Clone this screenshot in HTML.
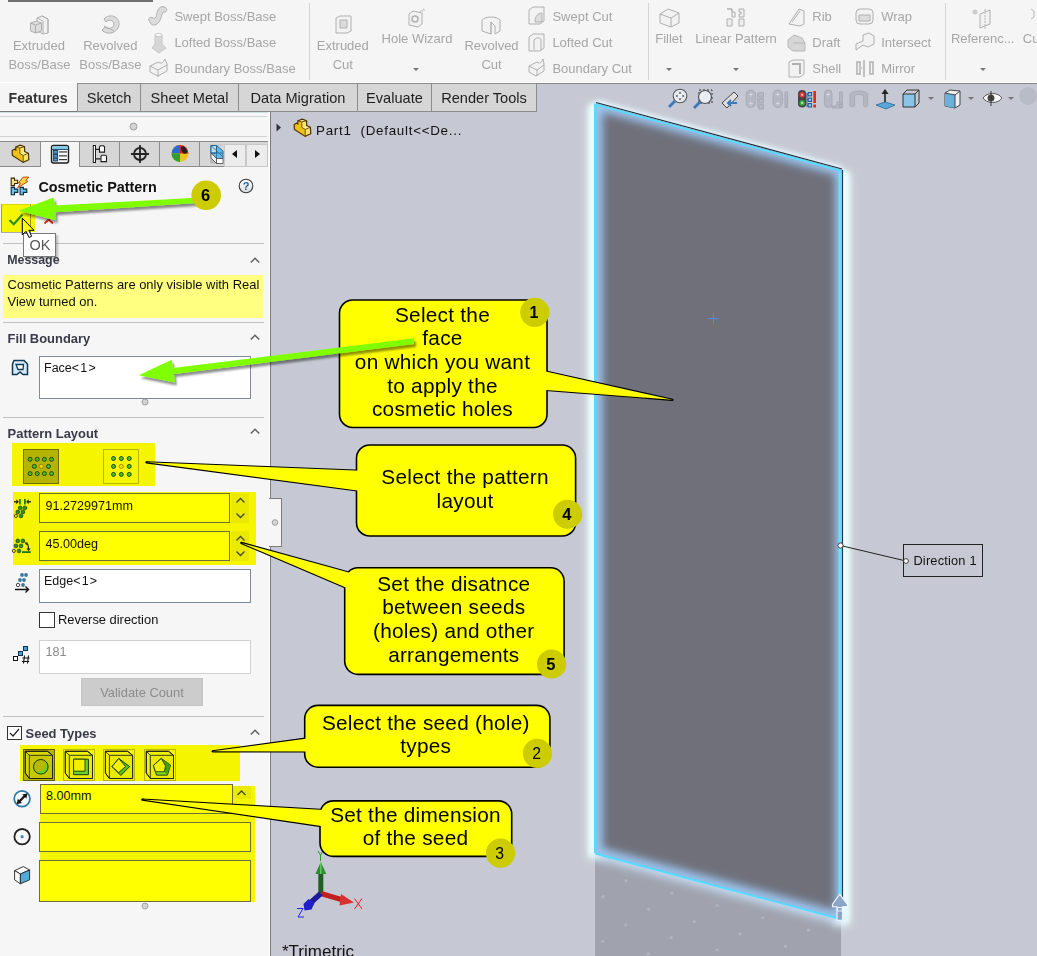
<!DOCTYPE html>
<html><head><meta charset="utf-8">
<style>
*{margin:0;padding:0;box-sizing:border-box}
html,body{width:1037px;height:956px;overflow:hidden;background:#f6f6f6;font-family:"Liberation Sans",sans-serif}
.a{position:absolute}
.t{position:absolute;line-height:1;white-space:nowrap}
.c{text-align:center}
svg{position:absolute;left:0;top:0}
</style></head><body>

<div class="a" style="left:0px;top:0px;width:1037px;height:83px;background:#f5f5f5"></div>
<div class="a" style="left:8px;top:0px;width:145px;height:2px;background:#707070"></div>
<div class="t c" style="left:-111.1px;width:300px;top:39.3px;font-size:13px;color:#a6a6a6;font-weight:normal;">Extruded</div>
<div class="t c" style="left:-110.5px;width:300px;top:58.4px;font-size:13px;color:#a6a6a6;font-weight:normal;">Boss/Base</div>
<div class="t c" style="left:-39.7px;width:300px;top:39.3px;font-size:13px;color:#a6a6a6;font-weight:normal;">Revolved</div>
<div class="t c" style="left:-39.7px;width:300px;top:58.4px;font-size:13px;color:#a6a6a6;font-weight:normal;">Boss/Base</div>
<div class="t" style="left:174.4px;top:10.2px;font-size:13px;color:#a6a6a6;font-weight:normal;">Swept Boss/Base</div>
<div class="t" style="left:174.4px;top:35.9px;font-size:13px;color:#a6a6a6;font-weight:normal;">Lofted Boss/Base</div>
<div class="t" style="left:174.4px;top:61.6px;font-size:13px;color:#a6a6a6;font-weight:normal;">Boundary Boss/Base</div>
<div class="a" style="left:309px;top:3px;width:1px;height:77px;background:#d4d4d4"></div>
<div class="t c" style="left:192.8px;width:300px;top:39.3px;font-size:13px;color:#a6a6a6;font-weight:normal;">Extruded</div>
<div class="t c" style="left:192.8px;width:300px;top:57.8px;font-size:13px;color:#a6a6a6;font-weight:normal;">Cut</div>
<div class="t c" style="left:267.0px;width:300px;top:32.4px;font-size:13px;color:#a6a6a6;font-weight:normal;">Hole Wizard</div>
<div class="t c" style="left:341.5px;width:300px;top:39.3px;font-size:13px;color:#a6a6a6;font-weight:normal;">Revolved</div>
<div class="t c" style="left:341.5px;width:300px;top:57.8px;font-size:13px;color:#a6a6a6;font-weight:normal;">Cut</div>
<div class="t" style="left:552.4px;top:9.8px;font-size:13px;color:#a6a6a6;font-weight:normal;">Swept Cut</div>
<div class="t" style="left:552.4px;top:35.9px;font-size:13px;color:#a6a6a6;font-weight:normal;">Lofted Cut</div>
<div class="t" style="left:552.4px;top:61.9px;font-size:13px;color:#a6a6a6;font-weight:normal;">Boundary Cut</div>
<div class="a" style="left:648px;top:3px;width:1px;height:77px;background:#d4d4d4"></div>
<div class="t c" style="left:519.0px;width:300px;top:32.0px;font-size:13px;color:#a6a6a6;font-weight:normal;">Fillet</div>
<div class="t c" style="left:586.0px;width:300px;top:32.0px;font-size:13px;color:#a6a6a6;font-weight:normal;">Linear Pattern</div>
<div class="t" style="left:812.3px;top:10.0px;font-size:13px;color:#a6a6a6;font-weight:normal;">Rib</div>
<div class="t" style="left:812.3px;top:35.9px;font-size:13px;color:#a6a6a6;font-weight:normal;">Draft</div>
<div class="t" style="left:812.3px;top:61.9px;font-size:13px;color:#a6a6a6;font-weight:normal;">Shell</div>
<div class="t" style="left:881.2px;top:10.0px;font-size:13px;color:#a6a6a6;font-weight:normal;">Wrap</div>
<div class="t" style="left:881.2px;top:35.9px;font-size:13px;color:#a6a6a6;font-weight:normal;">Intersect</div>
<div class="t" style="left:881.2px;top:61.9px;font-size:13px;color:#a6a6a6;font-weight:normal;">Mirror</div>
<div class="a" style="left:945px;top:3px;width:1px;height:77px;background:#d4d4d4"></div>
<div class="t c" style="left:832.7px;width:300px;top:32.0px;font-size:13px;color:#a6a6a6;font-weight:normal;">Referenc...</div>
<div class="t" style="left:1022.8px;top:32.0px;font-size:13px;color:#a6a6a6;font-weight:normal;">Cu</div>
<svg style="left:0;top:0" width="1037" height="82"><path d="M37 18l5-2 6 3v14l-5 1-6-3z" fill="#f2f2f2" stroke="#b0b0b0" stroke-width="1"/><path d="M42 16l6 3v14M37 18l6 3v13" fill="none" stroke="#b0b0b0"/><path d="M30.5 23l6-2 5 2v8l-6 2-5-2z" fill="#dcdcdc" stroke="#b0b0b0" stroke-width="1"/><path d="M30.5 23l5 2 6-2M35.5 25v8" fill="none" stroke="#b0b0b0"/><path d="M104 19c5-6 16-3 15 6c-1 8-12 11-17 5l3-3c3 3 9 1 9-3c0-4-6-5-8-2z" fill="#dcdcdc" stroke="#b0b0b0" stroke-width="1"/><path d="M104 26l10 5" stroke="#b0b0b0"/><path d="M150 22c-3-3 0-6 3-4c3 2 3-3 5-8c2-4 6-4 8-2c2 2 0 5-3 4c-2 4-2 9-6 12c-3 2-6 1-7-2z" fill="#dcdcdc" stroke="#b0b0b0" stroke-width="1"/><path d="M155 35h7v9l4 4-7 5-7-5 3-4z" fill="#d6d6d6" stroke="#c8c8c8"/><ellipse cx="158.5" cy="35" rx="3.5" ry="1.6" fill="#fafafa" stroke="#c8c8c8"/><path d="M150 66l8-4c3 2 5 1 7-3l2 5v7l-9 5-8-4z" fill="#f2f2f2" stroke="#b0b0b0" stroke-width="1"/><path d="M150 66l8 4 9-5M158 70v7" fill="none" stroke="#b0b0b0"/><path d="M336 18l4-2h11v15l-4 2h-11z" fill="#f2f2f2" stroke="#b0b0b0" stroke-width="1"/><path d="M340 20h7v8h-7z" fill="#dcdcdc" stroke="#b0b0b0" stroke-width="1"/><path d="M409 14l4-3 9 2v11l-4 3-9-2z" fill="#f2f2f2" stroke="#b0b0b0" stroke-width="1"/><circle cx="415" cy="19" r="3" fill="none" stroke="#b0b0b0" stroke-width="1.5"/><path d="M420 12l5-3" stroke="#b8b8b8" stroke-width="2" stroke-dasharray="1 1"/><path d="M482 20c3-4 15-4 18 0v11l-5 3v-8l-4-4v12l-9-3z" fill="#f2f2f2" stroke="#b0b0b0" stroke-width="1"/><path d="M491 22v12" stroke="#b0b0b0"/><path d="M529 10l4-3h11v14l-4 3h-11z" fill="#f2f2f2" stroke="#b0b0b0" stroke-width="1"/><path d="M535 22c0-6 3-9 7-9v9z" fill="#ddd" stroke="#b0b0b0"/><path d="M529 37l4-3h11v14l-4 3h-11z" fill="#f2f2f2" stroke="#b0b0b0" stroke-width="1"/><path d="M534 50v-10c3-3 6-3 7 0v10" fill="none" stroke="#b0b0b0"/><path d="M529 66l8-4c3 2 4 1 6-3l1 5v7l-8 5-7-4z" fill="#f2f2f2" stroke="#b0b0b0" stroke-width="1"/><path d="M529 66l8 4 7-5M537 70v6" fill="none" stroke="#b0b0b0"/><path d="M660 14l8-5 11 4v10l-8 4-11-4z" fill="#f2f2f2" stroke="#b0b0b0" stroke-width="1"/><path d="M660 14l11 4 8-5M671 18v9" fill="none" stroke="#b0b0b0"/><path d="M727 9h5v3h3v5h-3v-8zM739 9h5v8h-5v-3h2v-2h-2zM727 19h5v7h-5zM739 19h5v7h-5z" fill="#eee" stroke="#b0b0b0"/><path d="M789 24l10-15 5 2v13l-4 2z" fill="#f2f2f2" stroke="#b0b0b0" stroke-width="1"/><path d="M792 22l8-11" stroke="#b0b0b0"/><path d="M788 40l6-5 8 3 3 5v8h-12l-5-4z" fill="#d6d6d6" stroke="#b8b8b8"/><path d="M793 43h12" stroke="#b8b8b8"/><path d="M789 62l4-2h11v14l-4 3h-11z" fill="#f2f2f2" stroke="#b0b0b0" stroke-width="1"/><path d="M792 64h8v10" fill="none" stroke="#b0b0b0" stroke-width="2"/><rect x="856" y="9" width="17" height="15" rx="4" fill="#f2f2f2" stroke="#b0b0b0" stroke-width="1"/><path d="M859 15h11v6h-11z" fill="#ddd" stroke="#b0b0b0"/><path d="M856 44l7-3v-6l6-2 5 3v8l-6 3-5-2-7 5z" fill="#f2f2f2" stroke="#b0b0b0" stroke-width="1"/><path d="M857 62h3v12h-3zM870 62h3v12h-3zM864 60v17" fill="none" stroke="#b0b0b0" stroke-width="1.5"/><path d="M860 66l3 2-3 2z" fill="#ccc"/><circle cx="975" cy="12" r="2.5" fill="#ccc"/><path d="M980 14l10-4v14l-10 4z" fill="#f2f2f2" stroke="#b0b0b0" stroke-width="1"/><path d="M985 9v20" stroke="#b8b8b8" stroke-dasharray="2 1"/><path d="M1031 9l3 2v6l-3 2" fill="none" stroke="#b8b8b8"/></svg>
<svg style="left:413.3px;top:68px" width="6" height="4"><path d="M0 0h6L3 3z" fill="#777"/></svg>
<svg style="left:665.7px;top:68px" width="6" height="4"><path d="M0 0h6L3 3z" fill="#777"/></svg>
<svg style="left:732.7px;top:68px" width="6" height="4"><path d="M0 0h6L3 3z" fill="#777"/></svg>
<svg style="left:979.6px;top:68px" width="6" height="4"><path d="M0 0h6L3 3z" fill="#777"/></svg>
<div class="a" style="left:271px;top:83px;width:766px;height:873px;background:#c6c9d3"></div>
<svg style="left:0;top:0" width="1037" height="956"><defs><filter id="blur8" x="-20%" y="-20%" width="140%" height="140%"><feGaussianBlur stdDeviation="7"/></filter><filter id="blur4" x="-20%" y="-20%" width="140%" height="140%"><feGaussianBlur stdDeviation="4"/></filter><filter id="blur2" x="-20%" y="-20%" width="140%" height="140%"><feGaussianBlur stdDeviation="2.5"/></filter><clipPath id="faceclip"><path d="M596 103.5L842 170V919L596 853z"/></clipPath></defs><path d="M595 853L841 919V956H595z" fill="#a0a3ad"/><circle cx="602.7" cy="941.3" r="1.6" fill="#c4c6ce" opacity="0.5"/><circle cx="603.1" cy="896.7" r="1.6" fill="#c4c6ce" opacity="0.5"/><circle cx="625.7" cy="925.2" r="1.6" fill="#c4c6ce" opacity="0.5"/><circle cx="648.3" cy="953.7" r="1.6" fill="#c4c6ce" opacity="0.5"/><circle cx="626.1" cy="880.6" r="1.6" fill="#c4c6ce" opacity="0.5"/><circle cx="648.7" cy="909.1" r="1.6" fill="#c4c6ce" opacity="0.5"/><circle cx="671.3" cy="937.6" r="1.6" fill="#c4c6ce" opacity="0.5"/><circle cx="671.7" cy="893.0" r="1.6" fill="#c4c6ce" opacity="0.5"/><circle cx="694.3" cy="921.5" r="1.6" fill="#c4c6ce" opacity="0.5"/><circle cx="716.9" cy="950.0" r="1.6" fill="#c4c6ce" opacity="0.5"/><circle cx="717.3" cy="905.4" r="1.6" fill="#c4c6ce" opacity="0.5"/><circle cx="739.9" cy="933.9" r="1.6" fill="#c4c6ce" opacity="0.5"/><circle cx="762.9" cy="917.8" r="1.6" fill="#c4c6ce" opacity="0.5"/><circle cx="785.5" cy="946.3" r="1.6" fill="#c4c6ce" opacity="0.5"/><circle cx="808.5" cy="930.2" r="1.6" fill="#c4c6ce" opacity="0.5"/><path d="M596 858V106M842 173V925" fill="none" stroke="#f0ffff" stroke-width="15" filter="url(#blur4)"/><path d="M596 856V104M842 171V922" fill="none" stroke="#eaffff" stroke-width="13" filter="url(#blur2)"/><path d="M596 103.5L842 170" fill="none" stroke="#e8f8ff" stroke-width="8" filter="url(#blur2)"/><path d="M596 853L842 919" fill="none" stroke="#c4dcf4" stroke-width="12" filter="url(#blur4)"/><path d="M596 103.5L842 170V919L596 853z" fill="#6f707a"/><g clip-path="url(#faceclip)"><path d="M596 103.5L842 170V919L596 853z" fill="none" stroke="#9cc6f2" stroke-width="13" filter="url(#blur4)"/></g><path d="M595.2 103.5V853" stroke="#55dcff" stroke-width="2.4"/><path d="M840.3 170.5V919" stroke="#66e4ff" stroke-width="3.4"/><path d="M596 104.6L842 171.2" stroke="#55dcff" stroke-width="1.8"/><path d="M595 853.5L842 919.5" stroke="#55dcff" stroke-width="1.9"/><path d="M596 102.5L842 169" stroke="#1a2a3a" stroke-width="1.1"/><path d="M842.5 170V905" stroke="#2a3a50" stroke-width="1.2"/><path d="M708.5 318.5h10M713.5 313.5v10" stroke="#4a8ef0" stroke-width="1"/><path d="M840.5 545.5L906 561" stroke="#222" stroke-width="1"/><circle cx="840.5" cy="545.5" r="2.6" fill="#fff" stroke="#333" stroke-width="0.9"/><rect x="903.5" y="544.5" width="79" height="32" fill="#c6c9d3" stroke="#222" stroke-width="1"/><circle cx="906" cy="561" r="2.4" fill="#fff" stroke="#333" stroke-width="0.9"/><path d="M839.8 894.3l-7.3 10v2.5h4.5v13.5h5.6v-13.5h4.9v-2.5z" fill="#8aa6c8" stroke="#f4f8ff" stroke-width="1.1"/><path d="M837.5 907.5h4.6v3.5h-4.6z" fill="none" stroke="#f4f8ff" stroke-width="0.9"/></svg>
<div class="t" style="left:913.4px;top:555.2px;font-size:12.8px;color:#111;font-weight:normal;letter-spacing:0.2px">Direction 1</div>
<svg style="left:272px;top:117px" width="12" height="24"><path d="M4.5 6.5l4.5 4-4.5 4z" fill="#333"/></svg>
<svg style="left:282px;top:115px" width="32" height="24"><path d="M12.2 9.5L14.5 8.3L15.8 9L15.8 5.9L20.1 4.2L24.5 5.8L24.7 10.6L28.4 12.3L28.8 18.7L23.2 21.4L12.4 14.5z" fill="#f0bf18"/><path d="M19.8 6.9L24.5 5.8L24.7 10.6L19.8 12.4z" fill="#fbe56a"/><path d="M15.8 5.9L20.1 4.2L24.5 5.8L19.8 6.9z" fill="#fdf0a0"/><path d="M19.8 12.4L24.7 10.6L28.4 12.3L23.2 14.4z" fill="#fdf0a0"/><path d="M23.2 14.4L28.4 12.3L28.8 18.7L23.2 21.4z" fill="#fbe56a"/><path d="M12.2 9.5L14.5 8.3L15.8 9L15.8 5.9L20.1 4.2L24.5 5.8L24.7 10.6L28.4 12.3L28.8 18.7L23.2 21.4L12.4 14.5z" fill="none" stroke="#4a3000" stroke-width="1.2" stroke-linejoin="miter"/><path d="M15.8 5.9L19.8 6.9V12.4L23.2 14.4V21.4M19.8 6.9L24.5 5.8M23.2 14.4L28.4 12.3" fill="none" stroke="#6a4800" stroke-width="0.9"/></svg>
<div class="t" style="left:316.0px;top:124.0px;font-size:13.4px;color:#111;font-weight:normal;letter-spacing:0.72px">Part1&nbsp; (Default&lt;&lt;De...</div>
<div class="t" style="left:282.0px;top:943.1px;font-size:17px;color:#111;font-weight:normal;">*Trimetric</div>
<svg style="left:0;top:0" width="400" height="956"><path d="M320.8 893.5V872" stroke="#1f5f1f" stroke-width="5"/><path d="M315.3 874l5.5-12 5.5 12z" fill="#2f8f2f"/><path d="M320.8 862v12" stroke="#6fcf6f" stroke-width="1.2"/><path d="M320.8 893.5L343 900" stroke="#c02020" stroke-width="5"/><path d="M341 894l13 8.5-14.5 3z" fill="#d83030"/><path d="M320.8 893.5L308 905" stroke="#1a1a9a" stroke-width="5.5"/><path d="M303.5 904l5-5 6 4-3 6.5-7 1z" fill="#2020c8"/><path d="M318 851l2.5 4 2.5-4M320.5 855v6" fill="none" stroke="#20a020" stroke-width="1"/><path d="M354.5 898.5l7.5 10.5M362 898.5l-7.5 10.5" stroke="#f02020" stroke-width="1"/><path d="M297 908.5h6l-5 8.5h6" fill="none" stroke="#2020f0" stroke-width="1"/></svg>
<svg style="left:660px;top:84px" width="377" height="28"><circle cx="20" cy="12" r="6.8" fill="#e8eef4" stroke="#555" stroke-width="1.1"/><path d="M15 17l-6 6" stroke="#3a7ab8" stroke-width="2.8"/><path d="M20 7.5l-1.6 2h3.2zM20 16.5l-1.6-2h3.2zM15.5 12l2-1.6v3.2zM24.5 12l-2-1.6v3.2z" fill="#555"/><rect x="39" y="6" width="13" height="13" fill="none" stroke="#333" stroke-width="1" stroke-dasharray="2 2"/><circle cx="45" cy="13" r="6.5" fill="#e8eef4" stroke="#555" stroke-width="1.2"/><path d="M40 18l-6 6" stroke="#3a7ab8" stroke-width="2.8"/><path d="M62 19l12-11 4 4-11 12z" fill="#e0e0e0" stroke="#444" stroke-width="1"/><path d="M68 19h9M71 16l-3 3 3 3" fill="none" stroke="#3a7ab8" stroke-width="2"/><g fill="#b5b8c2" stroke="#a6a9b3" stroke-width="0.9"><rect x="86.1" y="6" width="9.4" height="17.6" rx="4.7"/><path d="M97.6 9v14M97.6 10.8h1.3M97.6 16.8h1.3M97.6 22.9h1.3"/><rect x="98.9" y="8.6" width="4.5" height="4.5"/><rect x="98.9" y="14.6" width="4.5" height="4.5"/><rect x="98.9" y="20.6" width="4.5" height="4.5"/><rect x="113" y="6" width="9.5" height="17.6" rx="4.7"/><rect x="125" y="8" width="2.7" height="12"/><rect x="125" y="21" width="2.7" height="2.5"/><rect x="164.4" y="6" width="7.6" height="17.6" rx="3.8"/><path d="M172 22h5v-4h5v6h-10z"/><rect x="179.5" y="8" width="2.7" height="11"/><rect x="179.5" y="20.5" width="2.7" height="2.5"/><path d="M190 10c2-4 16-4 17.6 0v12c-1 1-3 1-4 0v-10c-3-2-7-2-9 0v10c-1 1-3 1-4.6 0z"/></g><g stroke="#d8dae0" stroke-width="0.9"><path d="M88.8 10.5h4M90.8 8.5v4M88.8 19.5h4M90.8 17.5v4M115.7 10.5h4M117.7 8.5v4M115.7 19.5h4M117.7 17.5v4M166.2 10.5h4M168.2 8.5v4"/></g><rect x="138" y="6" width="8.2" height="17.6" rx="4.1" fill="#454545"/><circle cx="142.1" cy="10.8" r="2.7" fill="#e23a3a"/><circle cx="142.1" cy="18.9" r="2.7" fill="#38b038"/><path d="M141 10.8h2.2M142.1 9.7v2.2M141 18.9h2.2M142.1 17.8v2.2" stroke="#fff" stroke-width="0.7"/><path d="M147 9v14M147 10.2h1.2M147 15.8h1.2M147 21.3h1.2" stroke="#2a5a98" stroke-width="0.9"/><rect x="148.2" y="8.5" width="3.4" height="3.4" fill="#8ac8f0" stroke="#1a4a88" stroke-width="0.9"/><rect x="148.2" y="14.1" width="3.4" height="3.4" fill="#8ac8f0" stroke="#1a4a88" stroke-width="0.9"/><rect x="148.2" y="19.6" width="3.4" height="3.4" fill="#8ac8f0" stroke="#1a4a88" stroke-width="0.9"/><rect x="153.3" y="7" width="2.7" height="12" fill="#d83020"/><rect x="153.3" y="20.5" width="2.7" height="3" fill="#d83020"/><path d="M225 6v16" stroke="#222" stroke-width="1.6"/><path d="M221.5 10l3.5-5 3.5 5z" fill="#222"/><path d="M216 21l9-3 10 3-9 4z" fill="#5aa8d8" stroke="#2a6a98" stroke-width="0.8"/><path d="M243 10h12v13h-12z" fill="#8ac4e8" stroke="#333" stroke-width="1"/><path d="M243 10l4-4h12v13l-4 4M255 10l4-4" fill="none" stroke="#333" stroke-width="1"/><path d="M268 13l3 3 3-3z" fill="#777"/><path d="M285 9l5-3 10 1v14l-5 3-10-2z" fill="#f0f0f0" stroke="#444" stroke-width="1"/><path d="M285 9l10 2v13l-10-2z" fill="#6ab0dc"/><path d="M285 9l10 2 5-4M295 11v13" fill="none" stroke="#444" stroke-width="1"/><path d="M308 13l3 3 3-3z" fill="#777"/><path d="M323 14c4-6 15-6 19 0c-4 6-15 6-19 0z" fill="#fff" stroke="#555" stroke-width="1"/><circle cx="331" cy="14" r="3.5" fill="#444"/><path d="M331 7v15" stroke="#333" stroke-width="1"/><path d="M348 13l3 3 3-3z" fill="#777"/><circle cx="368" cy="12" r="9" fill="#b8bcc6"/></svg>
<div class="a" style="left:0px;top:82px;width:1037px;height:1px;background:#fff"></div>
<div class="a" style="left:77px;top:83px;width:960px;height:1px;background:#858585"></div>
<div class="a" style="left:0px;top:83px;width:271px;height:29px;background:#f5f5f5"></div>
<div class="a" style="left:0px;top:111px;width:271px;height:1px;background:#7a7a7a"></div>
<div class="t" style="left:8.5px;top:91.2px;font-size:14.2px;color:#333;font-weight:bold;">Features</div>
<div class="a" style="left:77px;top:83px;width:64px;height:29px;background:#d6d6d6;border:1px solid #8c8c8c"></div>
<div class="t c" style="left:-41.0px;width:300px;top:91.1px;font-size:14.6px;color:#1e1e1e;font-weight:normal;">Sketch</div>
<div class="a" style="left:140px;top:83px;width:99px;height:29px;background:#d6d6d6;border:1px solid #8c8c8c"></div>
<div class="t c" style="left:39.5px;width:300px;top:91.1px;font-size:14.6px;color:#1e1e1e;font-weight:normal;">Sheet Metal</div>
<div class="a" style="left:238px;top:83px;width:120px;height:29px;background:#d6d6d6;border:1px solid #8c8c8c"></div>
<div class="t c" style="left:148.0px;width:300px;top:91.1px;font-size:14.6px;color:#1e1e1e;font-weight:normal;">Data Migration</div>
<div class="a" style="left:357px;top:83px;width:75px;height:29px;background:#d6d6d6;border:1px solid #8c8c8c"></div>
<div class="t c" style="left:244.5px;width:300px;top:91.1px;font-size:14.6px;color:#1e1e1e;font-weight:normal;">Evaluate</div>
<div class="a" style="left:431px;top:83px;width:106px;height:29px;background:#d6d6d6;border:1px solid #8c8c8c"></div>
<div class="t c" style="left:334.0px;width:300px;top:91.1px;font-size:14.6px;color:#1e1e1e;font-weight:normal;">Render Tools</div>
<div class="a" style="left:0px;top:112px;width:271px;height:844px;background:#f6f6f6"></div>
<div class="a" style="left:269px;top:112px;width:1px;height:844px;background:#fff"></div>
<div class="a" style="left:270px;top:112px;width:1px;height:844px;background:#7c7c7c"></div>
<div class="a" style="left:0px;top:112px;width:268px;height:1px;background:#cfe0e0"></div>
<div class="a" style="left:0px;top:116px;width:267px;height:1px;background:#d3d3d3"></div>
<svg style="left:129px;top:122px" width="9" height="9"><circle cx="4.5" cy="4.5" r="3.5" fill="#d4d4d4" stroke="#a0a0a0"/></svg>
<div class="a" style="left:0px;top:136px;width:267px;height:1px;background:#d3d3d3"></div>
<div class="a" style="left:0px;top:141px;width:268px;height:26px;background:#d6d6d6;border-top:1px solid #8c8c8c;border-bottom:1px solid #8c8c8c"></div>
<div class="a" style="left:40px;top:141px;width:40px;height:26px;background:#f5f5f5;border-left:1px solid #8c8c8c;border-right:1px solid #8c8c8c;border-top:1px solid #8c8c8c"></div>
<div class="a" style="left:119px;top:141px;width:1px;height:25px;background:#8c8c8c"></div>
<div class="a" style="left:159px;top:141px;width:1px;height:25px;background:#8c8c8c"></div>
<div class="a" style="left:199px;top:141px;width:1px;height:25px;background:#8c8c8c"></div>
<div class="a" style="left:224px;top:144px;width:22px;height:23px;background:#ececec;border:1px solid #c8c8c8"></div>
<div class="a" style="left:246px;top:144px;width:22px;height:23px;background:#ececec;border:1px solid #c8c8c8"></div>
<svg style="left:0;top:141px" width="270" height="27"><path d="M12.2 9.5L14.5 8.3L15.8 9L15.8 5.9L20.1 4.2L24.5 5.8L24.7 10.6L28.4 12.3L28.8 18.7L23.2 21.4L12.4 14.5z" fill="#f0bf18"/><path d="M19.8 6.9L24.5 5.8L24.7 10.6L19.8 12.4z" fill="#fbe56a"/><path d="M15.8 5.9L20.1 4.2L24.5 5.8L19.8 6.9z" fill="#fdf0a0"/><path d="M19.8 12.4L24.7 10.6L28.4 12.3L23.2 14.4z" fill="#fdf0a0"/><path d="M23.2 14.4L28.4 12.3L28.8 18.7L23.2 21.4z" fill="#fbe56a"/><path d="M12.2 9.5L14.5 8.3L15.8 9L15.8 5.9L20.1 4.2L24.5 5.8L24.7 10.6L28.4 12.3L28.8 18.7L23.2 21.4L12.4 14.5z" fill="none" stroke="#4a3000" stroke-width="1.2" stroke-linejoin="miter"/><path d="M15.8 5.9L19.8 6.9V12.4L23.2 14.4V21.4M19.8 6.9L24.5 5.8M23.2 14.4L28.4 12.3" fill="none" stroke="#6a4800" stroke-width="0.9"/><rect x="51.5" y="4.5" width="17" height="17.5" rx="2" fill="#fafafa" stroke="#1c1c1c" stroke-width="1.4"/><path d="M52.2 5.2h15.6v3h-15.6z" fill="#7ec8e8"/><path d="M51.5 8.5h17" stroke="#1c3c5c" stroke-width="0.9"/><rect x="53.3" y="9.5" width="4.4" height="2.8" fill="#4a9ac8" stroke="#0a2a4a" stroke-width="0.8"/><rect x="59" y="10.4" width="8" height="1.1" fill="#222"/><rect x="53.3" y="13.4" width="4.4" height="2.8" fill="#4a9ac8" stroke="#0a2a4a" stroke-width="0.8"/><rect x="59" y="14.3" width="8" height="1.1" fill="#222"/><rect x="53.3" y="17.2" width="4.4" height="2.8" fill="#4a9ac8" stroke="#0a2a4a" stroke-width="0.8"/><rect x="59" y="18.1" width="8" height="1.1" fill="#222"/><rect x="93.3" y="4.5" width="2.2" height="17" fill="#fff" stroke="#1c1c1c" stroke-width="1"/><path d="M95.5 8.4h4M95.5 17.9h5" stroke="#1c1c1c" stroke-width="1.4"/><path d="M99.5 5.8l1-1h3l1 1v5.3h-5z" fill="#fff" stroke="#1c1c1c" stroke-width="1.1"/><path d="M101 15.2l1-1h3.5l1 1v5.4h-5.5z" fill="#fff" stroke="#1c1c1c" stroke-width="1.1"/><circle cx="140" cy="13" r="6" fill="none" stroke="#222" stroke-width="1.8"/><path d="M140 4v18M131 13h18" stroke="#222" stroke-width="1.8"/><circle cx="180" cy="12.5" r="8.5" fill="#e8c520"/><path d="M180 12.5L171.5 12.5A8.5 8.5 0 0 1 180 4z" fill="#2a6ad0"/><path d="M180 12.5L180 4A8.5 8.5 0 0 1 188.5 12.5z" fill="#d82020"/><path d="M180 12.5L171.5 12.5A8.5 8.5 0 0 0 180 21z" fill="#30a030"/><ellipse cx="184" cy="9" rx="2.5" ry="4" fill="#222" transform="rotate(-30 184 9)"/><path d="M210 3.7h13v18.8h-13z" fill="#b8b8b8"/><path d="M211 4.5h12v7l-12 0z" fill="#d8d8d8"/><path d="M211 4.5L216.5 4.5L223 10V17.5L216.5 17.5L211 12z" fill="#6ab8e0" stroke="#1a6aa0" stroke-width="1"/><path d="M211 4.5h5.5v7.5H211z" fill="#c8d8e0" stroke="#1a6aa0" stroke-width="1"/><path d="M211 12L216.5 17.5V22.5L211 17z" fill="#f0f0f0" stroke="#444" stroke-width="0.8"/><path d="M216.5 17.5H223V22.5H216.5z" fill="#fff" stroke="#444" stroke-width="0.8"/><path d="M211 4.5L223 16M216.5 4.5V17.5M211 12H223" stroke="#1a6aa0" stroke-width="0.8"/><path d="M232 13l5-4v8z" fill="#111"/><path d="M260 13l-5-4v8z" fill="#111"/></svg>
<div class="a" style="left:224px;top:144px;width:1px;height:23px;background:#c8c8c8"></div>
<svg style="left:9px;top:176px" width="22" height="22"><path d="M2.2 2.1h3.3v2.1h3.1v3.3h-3.1v2.1h-3.3z" fill="#fbe27a" stroke="#3a2800" stroke-width="1.1"/><path d="M2.2 11.4h3.3v1.7h3.3v3.3h-3.3v2.3h-3.3z" fill="#6cc4ec" stroke="#0a2a40" stroke-width="1.1"/><path d="M11.1 11.4h3.3v1.7h3.4v3.3h-3.4v2.3h-3.3z" fill="#6cc4ec" stroke="#0a2a40" stroke-width="1.1"/><path d="M8.6 11.8L11.5 7.1L9.3 6.9L14.2 1.1L19.8 1.1L16.9 4.4L19 5.4z" fill="#f5d040" stroke="#c04a10" stroke-width="1"/></svg>
<div class="t" style="left:38.4px;top:179.6px;font-size:14.4px;color:#111;font-weight:bold;">Cosmetic Pattern</div>
<svg style="left:237px;top:177px" width="18" height="18"><defs><linearGradient id="hg" x1="0" y1="0" x2="0" y2="1"><stop offset="0" stop-color="#fff"/><stop offset="1" stop-color="#ddd"/></linearGradient></defs><circle cx="9" cy="9" r="6.8" fill="url(#hg)" stroke="#3a3a3a" stroke-width="1.1"/><text x="9" y="13.2" font-size="11" font-weight="bold" text-anchor="middle" fill="#1a62a0" font-family="Liberation Sans">?</text></svg>
<div class="a" style="left:3px;top:243px;width:261px;height:1px;background:#c0c0c0"></div>
<div class="a" style="left:1px;top:204px;width:30px;height:29px;background:#f6f6f6;border-left:1px solid #aaa;border-bottom:1px solid #aaa;border-top:1px solid #ddd;border-right:1px solid #9a9a9a"></div>
<div class="a" style="left:23px;top:233px;width:33px;height:24px;background:#fff;border:1px solid #7a7a7a;box-shadow:2px 2px 2px rgba(0,0,0,0.25)"></div>
<div class="t" style="left:29.6px;top:238.4px;font-size:14.5px;color:#575757;font-weight:normal;">OK</div>
<svg style="left:0;top:200px" width="60" height="40"><path d="M9.5 20l4.2 4.2 8.8-9.8" fill="none" stroke="#2b8f1e" stroke-width="2.2"/><path d="M44.5 23.5l4-4 4.5 4" fill="none" stroke="#d83018" stroke-width="1.8"/><path d="M22.3 18.2v16.5l3.8-3.4 2.9 6.2 2.6-1.2-2.8-6h5.2z" fill="#fff" stroke="#000" stroke-width="1"/></svg>
<div class="a" style="left:1px;top:204px;width:34px;height:28px;background:#ffff00;mix-blend-mode:multiply"></div>
<div class="t" style="left:7.2px;top:253.9px;font-size:12.4px;color:#3a3a48;font-weight:bold;">Message</div>
<svg style="left:248px;top:254.5px" width="14" height="10"><path d="M2.8 7.5l4.2-4.2 4.2 4.2" fill="none" stroke="#666" stroke-width="1.6"/></svg>
<div class="a" style="left:3px;top:275px;width:260px;height:43px;background:#ffff80"></div>
<div class="t" style="left:7.6px;top:278.8px;font-size:12.95px;color:#111;font-weight:normal;">Cosmetic Patterns are only visible with Real</div>
<div class="t" style="left:7.6px;top:295.5px;font-size:12.95px;color:#111;font-weight:normal;">View turned on.</div>
<div class="a" style="left:3px;top:322px;width:261px;height:1px;background:#c0c0c0"></div>
<div class="t" style="left:7.6px;top:333.3px;font-size:12.95px;color:#3a3a48;font-weight:bold;">Fill Boundary</div>
<svg style="left:248px;top:332px" width="14" height="10"><path d="M2.8 7.5l4.2-4.2 4.2 4.2" fill="none" stroke="#666" stroke-width="1.6"/></svg>
<svg style="left:10px;top:359px" width="20" height="18"><path d="M4 1.5h10l3.5 3.5v10.5h-4.5l-3-2.5-3 2.5h-4.5v-10.5z" fill="#d8eaf6" stroke="#0f3a55" stroke-width="1.5"/><path d="M6 5.5h7.5l-0.5 5h-5z" fill="#fff" stroke="#0f3a55" stroke-width="1.3"/></svg>
<div class="a" style="left:39px;top:356px;width:212px;height:43px;background:#fff;border:1px solid #7e8aa0"></div>
<div class="t" style="left:44.0px;top:362.4px;font-size:12.5px;color:#111;font-weight:normal;">Face<span style="letter-spacing:1.2px">&lt;1&gt;</span></div>
<svg style="left:140px;top:397px" width="10" height="10"><circle cx="5" cy="5" r="3" fill="#d4d4d4" stroke="#a0a0a0"/></svg>
<div class="a" style="left:3px;top:417px;width:261px;height:1px;background:#c0c0c0"></div>
<div class="t" style="left:7.6px;top:427.8px;font-size:12.95px;color:#3a3a48;font-weight:bold;">Pattern Layout</div>
<svg style="left:248px;top:426px" width="14" height="10"><path d="M2.8 7.5l4.2-4.2 4.2 4.2" fill="none" stroke="#666" stroke-width="1.6"/></svg>
<div class="a" style="left:12px;top:443px;width:143px;height:43px;background:#f5f500"></div>
<div class="a" style="left:23px;top:449px;width:36px;height:35px;background:#b4b400;border:1px solid #6e6e00"></div>
<div class="a" style="left:103px;top:449px;width:36px;height:35px;border:1px solid #b8b800"></div>
<svg style="left:0;top:0" width="160" height="490"><circle cx="30.1" cy="459.3" r="2" fill="#4cc02a" stroke="#143a10" stroke-width="0.9"/><circle cx="37.2" cy="459.3" r="2" fill="#4cc02a" stroke="#143a10" stroke-width="0.9"/><circle cx="44.4" cy="459.3" r="2" fill="#4cc02a" stroke="#143a10" stroke-width="0.9"/><circle cx="51.5" cy="459.3" r="2" fill="#4cc02a" stroke="#143a10" stroke-width="0.9"/><circle cx="34.3" cy="466.4" r="2" fill="#4cc02a" stroke="#143a10" stroke-width="0.9"/><circle cx="41.3" cy="466.4" r="2" fill="#f0e000" stroke="#b07000" stroke-width="0.9"/><circle cx="48.5" cy="466.4" r="2" fill="#4cc02a" stroke="#143a10" stroke-width="0.9"/><circle cx="30.1" cy="473.6" r="2" fill="#4cc02a" stroke="#143a10" stroke-width="0.9"/><circle cx="37.2" cy="473.6" r="2" fill="#4cc02a" stroke="#143a10" stroke-width="0.9"/><circle cx="44.4" cy="473.6" r="2" fill="#4cc02a" stroke="#143a10" stroke-width="0.9"/><circle cx="51.5" cy="473.6" r="2" fill="#4cc02a" stroke="#143a10" stroke-width="0.9"/><circle cx="113.5" cy="458.5" r="2" fill="#4cc02a" stroke="#143a10" stroke-width="0.9"/><circle cx="113.5" cy="466.4" r="2" fill="#4cc02a" stroke="#143a10" stroke-width="0.9"/><circle cx="113.5" cy="474.4" r="2" fill="#4cc02a" stroke="#143a10" stroke-width="0.9"/><circle cx="121.3" cy="458.5" r="2" fill="#4cc02a" stroke="#143a10" stroke-width="0.9"/><circle cx="121.3" cy="466.4" r="2" fill="#f0f000" stroke="#b07000" stroke-width="0.9"/><circle cx="121.3" cy="474.4" r="2" fill="#4cc02a" stroke="#143a10" stroke-width="0.9"/><circle cx="129.2" cy="458.5" r="2" fill="#4cc02a" stroke="#143a10" stroke-width="0.9"/><circle cx="129.2" cy="466.4" r="2" fill="#4cc02a" stroke="#143a10" stroke-width="0.9"/><circle cx="129.2" cy="474.4" r="2" fill="#4cc02a" stroke="#143a10" stroke-width="0.9"/></svg>
<div class="a" style="left:13px;top:492px;width:243px;height:73px;background:#f5f500"></div>
<div class="a" style="left:39px;top:493px;width:191px;height:30px;background:#ffff00;border:1px solid #6e6e3a"></div>
<div class="t" style="left:45.4px;top:499.6px;font-size:12.6px;color:#111;font-weight:normal;">91.2729971mm</div>
<div class="a" style="left:39px;top:531px;width:191px;height:30px;background:#ffff00;border:1px solid #6e6e3a"></div>
<div class="t" style="left:45.4px;top:537.7px;font-size:12.6px;color:#111;font-weight:normal;">45.00deg</div>
<svg style="left:231px;top:493px" width="20" height="30"><rect x="0" y="0" width="18" height="30" fill="#eaea00"/><path d="M5.5 9.5l4-4 4 4M5.5 20.5l4 4 4-4" fill="none" stroke="#444" stroke-width="1.3"/></svg>
<svg style="left:231px;top:531px" width="20" height="30"><rect x="0" y="0" width="18" height="30" fill="#eaea00"/><path d="M5.5 9.5l4-4 4 4M5.5 20.5l4 4 4-4" fill="none" stroke="#444" stroke-width="1.3"/></svg>
<svg style="left:0;top:0" width="40" height="570"><path d="M14 501.8h4" stroke="#2a2a10" stroke-width="1.4"/><path d="M16.3 499.3l2.6 2.5-2.6 2.5z" fill="#2a2a10"/><path d="M19.9 499v5.6M24.9 499v5.6" stroke="#1f7a1f" stroke-width="1.8"/><path d="M31 501.8h-4" stroke="#2a2a10" stroke-width="1.4"/><path d="M28.7 499.3l-2.6 2.5 2.6 2.5z" fill="#2a2a10"/><circle cx="20.2" cy="507.9" r="1.9" fill="#2f8f2a" stroke="#12400f" stroke-width="0.7"/><circle cx="24.9" cy="507.9" r="1.9" fill="#2f8f2a" stroke="#12400f" stroke-width="0.7"/><circle cx="17.8" cy="512" r="1.9" fill="#2f8f2a" stroke="#12400f" stroke-width="0.7"/><circle cx="22.9" cy="512" r="1.9" fill="#2f8f2a" stroke="#12400f" stroke-width="0.7"/><circle cx="21" cy="515.9" r="1.9" fill="#2f8f2a" stroke="#12400f" stroke-width="0.7"/><circle cx="15.9" cy="515.9" r="1.6" fill="none" stroke="#3a2a00" stroke-width="0.9"/><circle cx="17.8" cy="540.9" r="1.9" fill="#2f8f2a" stroke="#12400f" stroke-width="0.7"/><circle cx="22.9" cy="540.9" r="1.9" fill="#2f8f2a" stroke="#12400f" stroke-width="0.7"/><circle cx="15.9" cy="545.9" r="1.9" fill="#2f8f2a" stroke="#12400f" stroke-width="0.7"/><circle cx="21" cy="545.9" r="1.9" fill="#2f8f2a" stroke="#12400f" stroke-width="0.7"/><circle cx="19" cy="550.9" r="1.9" fill="#2f8f2a" stroke="#12400f" stroke-width="0.7"/><circle cx="13.9" cy="550.9" r="1.6" fill="none" stroke="#3a2a00" stroke-width="0.9"/><path d="M22 552.1h8.8" stroke="#1f7a1f" stroke-width="1.8"/><path d="M25.5 543.2c2.5 0.5 3.2 3 2.9 6" fill="none" stroke="#2a2a10" stroke-width="1.2"/><path d="M24.8 542.5l3.2 0.1-1.8 2.6z" fill="#2a2a10"/><path d="M26.4 548.5h4.2l-2.1 2.8z" fill="#2a2a10"/></svg>
<div class="a" style="left:39px;top:569px;width:212px;height:34px;background:#fff;border:1px solid #7e8aa0"></div>
<div class="t" style="left:44.0px;top:575.4px;font-size:12.5px;color:#111;font-weight:normal;">Edge<span style="letter-spacing:1.2px">&lt;1&gt;</span></div>
<svg style="left:12px;top:572px" width="24" height="24"><circle cx="10" cy="3" r="1.9" fill="#3a7aa0"/><circle cx="14" cy="3" r="1.9" fill="#3a7aa0"/><circle cx="8" cy="8" r="1.9" fill="#3a7aa0"/><circle cx="12" cy="8" r="1.9" fill="#3a7aa0"/><circle cx="11" cy="13" r="1.9" fill="#3a7aa0"/><circle cx="6" cy="13" r="1.7" fill="none" stroke="#222" stroke-width="0.8"/><path d="M3 17.5h13M13.5 14.5l3 3-3 3" fill="none" stroke="#111" stroke-width="1.4"/></svg>
<div class="a" style="left:39px;top:612px;width:16px;height:16px;background:#fff;border:1px solid #333"></div>
<div class="t" style="left:58.0px;top:613.6px;font-size:12.9px;color:#111;font-weight:normal;">Reverse direction</div>
<div class="a" style="left:39px;top:640px;width:212px;height:34px;background:#fff;border:1px solid #d0d0d0"></div>
<div class="t" style="left:45.4px;top:646.2px;font-size:12.6px;color:#8a8a8a;font-weight:normal;">181</div>
<svg style="left:12px;top:645px" width="22" height="22"><rect x="1.5" y="11.5" width="4" height="4" fill="#fff" stroke="#111" stroke-width="1"/><rect x="6.5" y="6.5" width="4" height="4" fill="#4aa0d0" stroke="#135" stroke-width="1"/><rect x="11.5" y="1.5" width="4" height="4" fill="#4aa0d0" stroke="#135" stroke-width="1"/><path d="M12.5 10.5l-1 8M16.5 10.5l-1 8M10.5 13h7M10 16.5h7" stroke="#111" stroke-width="1.1"/></svg>
<div class="a" style="left:81px;top:678px;width:122px;height:28px;background:#cccccc;border:1px solid #c4c4c4"></div>
<div class="t c" style="left:-8.0px;width:300px;top:686.6px;font-size:12.9px;color:#8c8c8c;font-weight:normal;">Validate Count</div>
<div class="a" style="left:3px;top:716px;width:261px;height:1px;background:#c0c0c0"></div>
<div class="a" style="left:7px;top:726px;width:15px;height:14px;background:#fff;border:1px solid #333"></div>
<svg style="left:7px;top:726px" width="15" height="14"><path d="M3 7l3 3 6-7" fill="none" stroke="#222" stroke-width="1.2"/></svg>
<div class="t" style="left:25.6px;top:728.2px;font-size:12.95px;color:#3a3a48;font-weight:bold;">Seed Types</div>
<svg style="left:248px;top:727px" width="14" height="10"><path d="M2.8 7.5l4.2-4.2 4.2 4.2" fill="none" stroke="#666" stroke-width="1.6"/></svg>
<div class="a" style="left:20px;top:745px;width:220px;height:36px;background:#f5f500"></div>
<div class="a" style="left:23px;top:749px;width:32px;height:32px;background:#b4b400;border:1px solid #5e5e00"></div>
<div class="a" style="left:63px;top:749px;width:32px;height:32px;border:1px solid #b8b800"></div>
<div class="a" style="left:103px;top:749px;width:32px;height:32px;border:1px solid #b8b800"></div>
<div class="a" style="left:144px;top:749px;width:32px;height:32px;border:1px solid #b8b800"></div>
<svg style="left:0;top:0" width="200" height="800"><path d="M25.3 751.3H47.5L52.5 755.3V778.5H29.299999999999997L25.3 773z" fill="#d8d800" stroke="#222" stroke-width="1"/><path d="M29.299999999999997 755.3H52.5V778.5H29.299999999999997z" fill="#c8c800"/><path d="M25.3 751.3L29.299999999999997 755.3H52.5M29.299999999999997 755.3V778.5" fill="none" stroke="#222" stroke-width="0.9"/><path d="M25.3 751.3H47.5L52.5 755.3V778.5H29.299999999999997L25.3 773z" fill="none" stroke="#222" stroke-width="1"/><clipPath id="cc"><circle cx="40.8" cy="766.8" r="7.3"/></clipPath><circle cx="40.8" cy="766.8" r="7.3" fill="#6ad030"/><g clip-path="url(#cc)"><circle cx="38.3" cy="764.3" r="7.3" fill="#b8b800"/></g><circle cx="40.8" cy="766.8" r="7.3" fill="none" stroke="#1a3a0a" stroke-width="1"/><path d="M65.3 751.3H87.5L92.5 755.3V778.5H69.3L65.3 773z" fill="#f2f200" stroke="#222" stroke-width="1"/><path d="M69.3 755.3H92.5V778.5H69.3z" fill="#eaea00"/><path d="M65.3 751.3L69.3 755.3H92.5M69.3 755.3V778.5" fill="none" stroke="#222" stroke-width="0.9"/><path d="M65.3 751.3H87.5L92.5 755.3V778.5H69.3L65.3 773z" fill="none" stroke="#222" stroke-width="1"/><path d="M73.6 759.2H88.4V774.7H73.6z" fill="#6ad030" stroke="#1a3a0a" stroke-width="1"/><path d="M73.6 759.2H85V771.2H73.6z" fill="#f2f200" stroke="#1a3a0a" stroke-width="0.9"/><path d="M105.39999999999999 751.3H127.6L132.6 755.3V778.5H109.39999999999999L105.39999999999999 773z" fill="#f2f200" stroke="#222" stroke-width="1"/><path d="M109.39999999999999 755.3H132.6V778.5H109.39999999999999z" fill="#eaea00"/><path d="M105.39999999999999 751.3L109.39999999999999 755.3H132.6M109.39999999999999 755.3V778.5" fill="none" stroke="#222" stroke-width="0.9"/><path d="M105.39999999999999 751.3H127.6L132.6 755.3V778.5H109.39999999999999L105.39999999999999 773z" fill="none" stroke="#222" stroke-width="1"/><path d="M118.8 758.5L129.6 766.6L120.8 775.4L112 766.6z" fill="#5ac020" stroke="#1a3a0a" stroke-width="1"/><path d="M118.8 758.5L125.6 766.6L118.6 772.6L112 766.6z" fill="#f2f200" stroke="#1a3a0a" stroke-width="0.9"/><path d="M146.29999999999998 751.3H168.5L173.5 755.3V778.5H150.29999999999998L146.29999999999998 773z" fill="#f2f200" stroke="#222" stroke-width="1"/><path d="M150.29999999999998 755.3H173.5V778.5H150.29999999999998z" fill="#eaea00"/><path d="M146.29999999999998 751.3L150.29999999999998 755.3H173.5M150.29999999999998 755.3V778.5" fill="none" stroke="#222" stroke-width="0.9"/><path d="M146.29999999999998 751.3H168.5L173.5 755.3V778.5H150.29999999999998L146.29999999999998 773z" fill="none" stroke="#222" stroke-width="1"/><path d="M161.3 758.4L170.5 765.1L167.4 775.1H156.5L153.4 765.5z" fill="#80e020" stroke="#1a3a0a" stroke-width="1"/><path d="M161.3 758.4L170.5 765.1L167.4 775.1L164.3 771.8L165.5 765.9z" fill="#4aa010"/><path d="M161.3 758.4L165.5 765.9L164.3 771.8H155.5L153.4 765.5z" fill="#f2f200" stroke="#1a3a0a" stroke-width="0.9"/></svg>
<div class="a" style="left:40px;top:786px;width:215px;height:116px;background:#f5f500"></div>
<div class="a" style="left:40px;top:784px;width:193px;height:30px;background:#ffff00;border:1px solid #6e6e3a"></div>
<div class="t" style="left:45.9px;top:790.0px;font-size:12.6px;color:#111;font-weight:normal;">8.00mm</div>
<svg style="left:233px;top:786px" width="20" height="28"><rect x="0" y="0" width="18" height="13" fill="#eaea00"/><path d="M4.5 9l4-4 4 4" fill="none" stroke="#444" stroke-width="1.3"/></svg>
<div class="a" style="left:39px;top:822px;width:212px;height:30px;background:#ffff00;border:1px solid #6e6e3a"></div>
<div class="a" style="left:39px;top:860px;width:212px;height:42px;background:#ffff00;border:1px solid #6e6e3a"></div>
<svg style="left:140px;top:901px" width="10" height="10"><circle cx="5" cy="5" r="3" fill="#d4d4d4" stroke="#a0a0a0"/></svg>
<svg style="left:0;top:780px" width="40" height="110"><circle cx="22.1" cy="18.7" r="7.9" fill="#fafafa" stroke="#2a7aa8" stroke-width="1.7"/><path d="M19.2 21.6l5.8-5.8" stroke="#1a1a1a" stroke-width="2.2"/><path d="M16.6 24.2l1.2-5.4 4.2 4.2z" fill="#1a1a1a"/><path d="M27.6 13.2l-1.2 5.4-4.2-4.2z" fill="#1a1a1a"/><circle cx="22.1" cy="56.7" r="7.7" fill="#fafafa" stroke="#222" stroke-width="1.8"/><circle cx="22.1" cy="56.7" r="1.6" fill="#3a8ac0"/><path d="M14.6 90.6L23.3 86.6L29.6 90L20.4 94z" fill="#fafafa" stroke="#222" stroke-width="0.9" stroke-linejoin="round"/><path d="M14.6 90.6L20.4 94V103.8L14.6 99.8z" fill="#fafafa" stroke="#222" stroke-width="0.9" stroke-linejoin="round"/><path d="M20.4 94L29.6 90V99.8L20.4 103.8z" fill="#58a8d8" stroke="#222" stroke-width="0.9" stroke-linejoin="round"/></svg>
<div class="a" style="left:269px;top:498px;width:13px;height:49px;background:#f6f6f6;border:1px solid #7c7c7c;border-left:none"></div>
<svg style="left:271px;top:518px" width="10" height="10"><circle cx="4" cy="4.5" r="2.8" fill="#d4d4d4" stroke="#a0a0a0"/></svg>
<svg style="left:0;top:0" width="1037" height="956" font-family="Liberation Sans"><defs><filter id="sh" x="-10%" y="-50%" width="130%" height="200%"><feGaussianBlur in="SourceAlpha" stdDeviation="1.3"/><feOffset dx="2" dy="3"/><feComponentTransfer><feFuncA type="linear" slope="0.45"/></feComponentTransfer><feMerge><feMergeNode/><feMergeNode in="SourceGraphic"/></feMerge></filter></defs><path d="M672.4 399.8L542.5 370.8L542.5 389.7z" fill="none" stroke="#000" stroke-width="2.2" stroke-linejoin="round"/><rect x="340.3" y="300.8" width="205.90000000000003" height="125.89999999999998" rx="12.5" fill="none" stroke="#000" stroke-width="3.2"/><path d="M672.4 399.8L542.5 370.8L542.5 389.7z" fill="#ffff00"/><rect x="340.3" y="300.8" width="205.90000000000003" height="125.89999999999998" rx="12.5" fill="#ffff00"/><text x="442.5" y="321.5" font-size="20.8" letter-spacing="0.25" text-anchor="middle" fill="#000">Select the</text><text x="442.5" y="345" font-size="20.8" letter-spacing="0.25" text-anchor="middle" fill="#000">face</text><text x="442.5" y="369" font-size="20.8" letter-spacing="0.25" text-anchor="middle" fill="#000">on which you want</text><text x="442.5" y="392.7" font-size="20.8" letter-spacing="0.25" text-anchor="middle" fill="#000">to apply the</text><text x="442.5" y="416.2" font-size="20.8" letter-spacing="0.25" text-anchor="middle" fill="#000">cosmetic holes</text><circle cx="534.8" cy="312.4" r="14.6" fill="#cccc00"/><text x="534.0" y="318.15999999999997" font-size="16" font-weight="bold" text-anchor="middle" fill="#000">1</text><path d="M146.4 462.3L361 470.8L361 490.9z" fill="none" stroke="#000" stroke-width="2.2" stroke-linejoin="round"/><rect x="357.3" y="445.8" width="217.50000000000006" height="89.40000000000003" rx="12.5" fill="none" stroke="#000" stroke-width="3.2"/><path d="M146.4 462.3L361 470.8L361 490.9z" fill="#ffff00"/><rect x="357.3" y="445.8" width="217.50000000000006" height="89.40000000000003" rx="12.5" fill="#ffff00"/><text x="465.1" y="484" font-size="20.8" letter-spacing="0.25" text-anchor="middle" fill="#000">Select the pattern</text><text x="465.1" y="508.3" font-size="20.8" letter-spacing="0.25" text-anchor="middle" fill="#000">layout</text><circle cx="567.6" cy="514.3" r="14.6" fill="#cccc00"/><text x="566.8000000000001" y="520.24" font-size="16.5" font-weight="bold" text-anchor="middle" fill="#000">4</text><path d="M241.3 542.9L351.5 573.2L349.2 588.9z" fill="none" stroke="#000" stroke-width="2.2" stroke-linejoin="round"/><rect x="345.5" y="568.5999999999999" width="217.80000000000007" height="105.00000000000011" rx="12.5" fill="none" stroke="#000" stroke-width="3.2"/><path d="M241.3 542.9L351.5 573.2L349.2 588.9z" fill="#ffff00"/><rect x="345.5" y="568.5999999999999" width="217.80000000000007" height="105.00000000000011" rx="12.5" fill="#ffff00"/><text x="453.8" y="590.7" font-size="20.8" letter-spacing="0.25" text-anchor="middle" fill="#000">Set the disatnce</text><text x="453.8" y="614.4" font-size="20.8" letter-spacing="0.25" text-anchor="middle" fill="#000">between seeds</text><text x="453.8" y="638" font-size="20.8" letter-spacing="0.25" text-anchor="middle" fill="#000">(holes) and other</text><text x="453.8" y="661.5" font-size="20.8" letter-spacing="0.25" text-anchor="middle" fill="#000">arrangements</text><circle cx="551.6" cy="664" r="14.6" fill="#cccc00"/><text x="550.8000000000001" y="669.94" font-size="16.5" font-weight="bold" text-anchor="middle" fill="#000">5</text><path d="M212.6 751.3L309.2 738.2L309.2 751.5z" fill="none" stroke="#000" stroke-width="2.2" stroke-linejoin="round"/><rect x="305.5" y="706.1999999999999" width="243.60000000000002" height="60.20000000000016" rx="12.5" fill="none" stroke="#000" stroke-width="3.2"/><path d="M212.6 751.3L309.2 738.2L309.2 751.5z" fill="#ffff00"/><rect x="305.5" y="706.1999999999999" width="243.60000000000002" height="60.20000000000016" rx="12.5" fill="#ffff00"/><text x="425.8" y="729.7" font-size="20.8" letter-spacing="0.25" text-anchor="middle" fill="#000">Select the seed (hole)</text><text x="425.8" y="753.3" font-size="20.8" letter-spacing="0.25" text-anchor="middle" fill="#000">types</text><circle cx="537.4" cy="753.4" r="14.6" fill="#cccc00"/><text x="536.6" y="759.088" font-size="15.8" font-weight="normal" text-anchor="middle" fill="#000">2</text><path d="M142.3 799.6L324.5 810L324.5 826.6z" fill="none" stroke="#000" stroke-width="2.2" stroke-linejoin="round"/><rect x="320.8" y="801.6999999999999" width="190.09999999999997" height="53.90000000000009" rx="12.5" fill="none" stroke="#000" stroke-width="3.2"/><path d="M142.3 799.6L324.5 810L324.5 826.6z" fill="#ffff00"/><rect x="320.8" y="801.6999999999999" width="190.09999999999997" height="53.90000000000009" rx="12.5" fill="#ffff00"/><text x="415.5" y="821.7" font-size="20.8" letter-spacing="0.25" text-anchor="middle" fill="#000">Set the dimension</text><text x="415.5" y="845" font-size="20.8" letter-spacing="0.25" text-anchor="middle" fill="#000">of the seed</text><circle cx="500.5" cy="853.1" r="14.6" fill="#cccc00"/><text x="499.7" y="858.788" font-size="15.8" font-weight="normal" text-anchor="middle" fill="#000">3</text><path d="M138.7 375.2L171.7 359.8L172.9 368L413.8 338.3L414 344L173.9 374L174.8 382.4z" fill="#80ff00" filter="url(#sh)"/><path d="M18.5 210.8L53.5 197.4L55 205.5L196 197.8L196 203L55.2 212.2L55.6 220.3z" fill="#80ff00" filter="url(#sh)"/><circle cx="206.2" cy="195.3" r="14.8" fill="#cccc00"/><text x="205.6" y="201.2" font-size="16.5" font-weight="bold" text-anchor="middle" fill="#000">6</text></svg>
</body></html>
